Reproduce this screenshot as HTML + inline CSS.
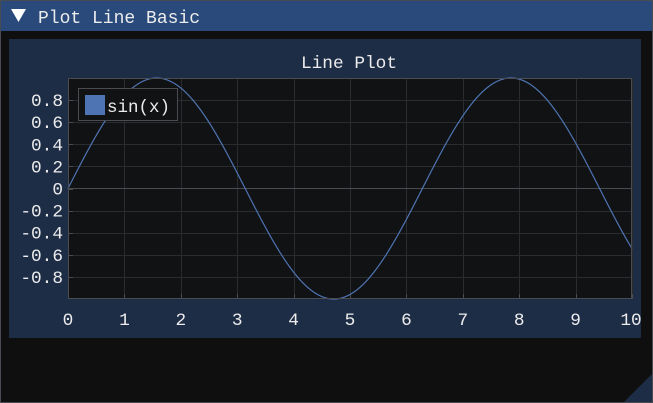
<!DOCTYPE html>
<html><head><style>
html,body{margin:0;padding:0;background:#0f0f0f;width:653px;height:403px;overflow:hidden}
text{font-family:"Liberation Mono","DejaVu Sans Mono",monospace;fill:#ececec}
</style></head><body>
<svg id="s" width="653" height="403" xmlns="http://www.w3.org/2000/svg">
<rect x="0.5" y="0.5" width="652" height="402" fill="#0f0f0f" stroke="#4a4a52"/>
<rect x="1" y="1" width="651" height="30" fill="#294a7a"/>
<polygon points="11,9 26,9 18.5,22" fill="#fff"/>
<text x="38" y="23" font-size="18">Plot Line Basic</text>
<rect x="9" y="39" width="632" height="299" fill="#1e2d46"/>
<text x="349" y="68" font-size="17.8" text-anchor="middle">Line Plot</text>
<rect x="68" y="78" width="564" height="221" fill="#111214"/>
<g id="grid" stroke="#2a2c30" stroke-width="1"></g>
<line x1="68" y1="188.5" x2="632" y2="188.5" stroke="#4a4c52"/>
<path id="p" fill="none" stroke="#4f74b3" stroke-width="1.2"/>
<rect x="68.5" y="78.5" width="563" height="220" fill="none" stroke="#4a4c52"/>
<rect x="78.5" y="88.5" width="99" height="32" fill="#111214" stroke="#4a4c52"/>
<rect x="85" y="95" width="20" height="20" fill="#4f74b3"/>
<text x="107" y="112" font-size="17.5">sin(x)</text>
<g id="lab" font-size="17.8"></g>
<polygon points="652,374 652,402 624,402" fill="#1e2d46"/>
</svg>
<script>
var ns="http://www.w3.org/2000/svg",g=document.getElementById('grid'),lab=document.getElementById('lab');
function el(p,t,a,tx){var e=document.createElementNS(ns,t);for(var k in a)e.setAttribute(k,a[k]);if(tx!=null)e.textContent=tx;p.appendChild(e);}
for(var i=0;i<=10;i++){var x=68+i*56.4;var xr=Math.round(x)+0.5;
 el(g,'line',{x1:xr,y1:78,x2:xr,y2:299});
 el(g,'line',{x1:xr,y1:294,x2:xr,y2:299,stroke:'#4a4c52'});
 el(lab,'text',{x:i==10?631:x,y:325,'text-anchor':'middle'},String(i));}
for(var j=-4;j<=4;j++){var v=j*0.2;var y=188.5-v*110.5;var yr=Math.round(y)+0.5;
 if(j!=0)el(g,'line',{x1:68,y1:yr,x2:632,y2:yr});
 el(g,'line',{x1:68,y1:yr,x2:73,y2:yr,stroke:'#4a4c52'});
 var s=j==0?'0':v.toFixed(1);
 el(lab,'text',{x:63,y:y+6,'text-anchor':'end'},s);}
var d='';for(var k=0;k<=1000;k++){var xv=k/100;d+=(k?'L':'M')+(68+xv*56.4).toFixed(2)+','+(188.5-Math.sin(xv)*110.5).toFixed(2);}
document.getElementById('p').setAttribute('d',d);
</script>
</body></html>
